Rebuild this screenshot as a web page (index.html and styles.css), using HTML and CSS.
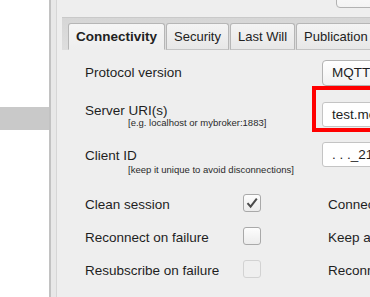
FILE: index.html
```html
<!DOCTYPE html>
<html lang="en">
<head>
    <meta charset="UTF-8">
    <title>Connection settings</title>
    <link rel="stylesheet" href="styles.css">
</head>
<body>
    <div class="app">
        <div class="sidebar">
            <div class="list-item selected"></div>
        </div>
        <div class="splitter"></div>

        <div class="main">
            <div class="topbar">
                <div class="top-button"></div>
            </div>

            <div class="tabwidget">
                <div class="tabbar">
                    <div class="tab active">Connectivity</div>
                    <div class="tab">Security</div>
                    <div class="tab">Last Will</div>
                    <div class="tab">Publication</div>
                    <div class="tab">Subscription</div>
                </div>

                <div class="pane">
                    <div class="form-row row-protocol">
                        <div class="label-col"><div class="label">Protocol version</div></div>
                        <div class="combo">MQTT 3.1.1</div>
                    </div>

                    <div class="form-row row-server">
                        <div class="label-col">
                            <div class="label">Server URI(s)</div>
                            <div class="hint">[e.g. localhost or mybroker:1883]</div>
                        </div>
                        <div class="field highlighted">
                            <div class="line-edit">test.mosquitto.org</div>
                        </div>
                    </div>

                    <div class="form-row row-client">
                        <div class="label-col">
                            <div class="label">Client ID</div>
                            <div class="hint">[keep it unique to avoid disconnections]</div>
                        </div>
                        <div class="field">
                            <div class="line-edit">. . ._21</div>
                        </div>
                    </div>

                    <div class="check-rows">
                        <div class="check-row">
                            <div class="label">Clean session</div>
                            <div class="checkbox checked">
                                <svg width="14" height="14" viewBox="0 0 14 14"><path d="M2.5 7.2 L5.6 10.6 L11.8 2.6" fill="none" stroke="#4b4b4b" stroke-width="2"/></svg>
                            </div>
                            <div class="label right">Connect on startup</div>
                        </div>
                        <div class="check-row">
                            <div class="label">Reconnect on failure</div>
                            <div class="checkbox"></div>
                            <div class="label right">Keep alive interval</div>
                        </div>
                        <div class="check-row">
                            <div class="label">Resubscribe on failure</div>
                            <div class="checkbox disabled"></div>
                            <div class="label right">Reconnect interval</div>
                        </div>
                    </div>
                </div>
            </div>
        </div>
    </div>
</body>
</html>
```

FILE: styles.css
```css
    html, body {
        margin: 0;
        padding: 0;
        overflow: hidden;
    }

    body {
        font-family: "Liberation Sans", Arial, sans-serif;
        font-size: 13.5px;
        color: #1e1e1e;
        background-color: #eeeeee;
    }

    .app {
        display: flex;
        width: 560px;
        height: 297px;
    }

    /* Левая панель со списком */
    .sidebar {
        width: 49px;
        flex: none;
        background-color: #ffffff;
    }

    .list-item {
        height: 23px;
    }

    .list-item.selected {
        margin-top: 107px;
        background-color: #c9c9c9;
    }

    .splitter {
        width: 5px;
        flex: none;
        background-color: #e8e8e8;
        border-left: 2px solid #c2c2c2;
        border-right: 1px solid #d6d6d6;
    }

    .main {
        flex: 1;
        padding-left: 5px;
        background-color: #eeeeee;
    }

    .topbar {
        height: 17px;
        display: flex;
        justify-content: flex-end;
        align-items: flex-start;
    }

    .top-button {
        width: 120px;
        height: 26px;
        margin-top: -20px;
        margin-right: 102px;
        border: 1px solid #b2b2b2;
        border-radius: 4px;
        background: linear-gradient(#ffffff, #f3f3f3);
    }

    /* Вкладки */
    .tabbar {
        display: flex;
        gap: 1px;
        height: 32px;
        padding-left: 6px;
        border-top: 1px solid #c9c9c9;
        background: linear-gradient(#d6d6d6, #dedede);
        align-items: flex-end;
    }

    .tab {
        height: 25px;
        line-height: 25px;
        padding: 0 7px;
        font-size: 13px;
        border: 1px solid #b6b6b6;
        border-bottom-color: #c4c4c4;
        border-radius: 3px 3px 0 0;
        background: linear-gradient(#f4f4f4, #e7e7e7);
        white-space: nowrap;
        color: #222222;
    }

    .tab.active {
        padding: 0 7px;
        font-size: 13.5px;
        font-weight: bold;
        border-bottom-color: #eeeeee;
        background: linear-gradient(#f6f6f6, #eeeeee);
    }

    .pane {
        padding-left: 23px;
        background-color: #eeeeee;
    }

    .form-row {
        display: flex;
        align-items: flex-start;
    }

    .label-col {
        width: 237px;
        flex: none;
    }

    .label {
        line-height: 14px;
        white-space: nowrap;
    }

    .hint {
        font-size: 9.5px;
        line-height: 10px;
        padding-left: 43px;
        color: #2a2a2a;
        white-space: nowrap;
    }

    .row-protocol {
        margin-top: 10px;
        height: 26px;
        align-items: center;
    }

    .row-server {
        margin-top: 16px;
        height: 25px;
    }

    .row-server .label-col {
        padding-top: 2px;
    }

    .row-client {
        margin-top: 15px;
        height: 25px;
    }

    .row-client .label-col {
        padding-top: 7px;
    }

    .row-client .hint {
        margin-top: 2px;
    }

    .combo {
        width: 140px;
        height: 24px;
        line-height: 24px;
        padding-left: 9px;
        border: 1px solid #b3b3b3;
        border-radius: 4px;
        background: linear-gradient(#ffffff, #f1f1f1);
        white-space: nowrap;
    }

    .field {
        position: relative;
    }

    .line-edit {
        width: 160px;
        height: 23px;
        line-height: 23px;
        padding-left: 9px;
        border: 1px solid #c4c4c4;
        border-radius: 3px;
        background-color: #ffffff;
        white-space: nowrap;
    }

    /* Красная рамка-выделение поверх поля */
    .highlighted::after {
        content: "";
        position: absolute;
        left: -10px;
        top: -16px;
        right: -30px;
        bottom: -5px;
        border: 4px solid #ff0000;
    }

    /* Флажки */
    .check-rows {
        margin-top: 19px;
    }

    .check-row {
        display: flex;
        align-items: center;
        height: 33px;
    }

    .check-row > .label {
        width: 158px;
        flex: none;
        line-height: 33px;
        padding-top: 2px;
        height: 31px;
    }

    .check-row > .label.right {
        width: auto;
        margin-left: 67px;
    }

    .checkbox {
        width: 16px;
        height: 16px;
        flex: none;
        display: flex;
        align-items: center;
        justify-content: center;
        border: 1px solid #a9a9a9;
        border-radius: 3px;
        background: linear-gradient(#fdfdfd, #ececec);
    }

    .checkbox.disabled {
        border-color: #d2d2d2;
        background: #efefef;
    }
```
